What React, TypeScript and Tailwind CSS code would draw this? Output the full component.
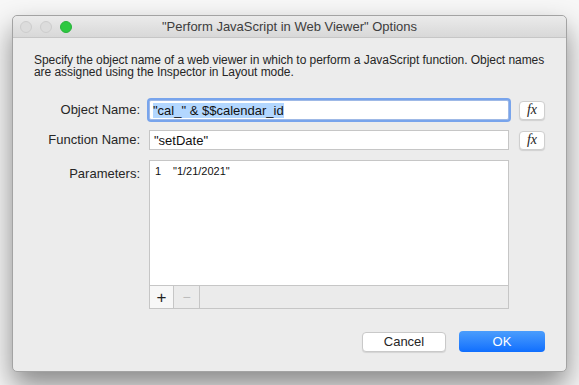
import React from "react";

const FxButton = () => (
  <div className="flex h-[19px] w-[26px] items-center justify-center rounded-[4px] border border-[#cfcfcf] bg-white shadow-[0_1px_1px_rgba(0,0,0,0.12)]">
    <span className="font-['Liberation_Serif',serif] text-[14px] italic leading-none text-[#222]">fx</span>
  </div>
);

const App = () => {
  return (
    <div className="h-[385px] w-[579px] overflow-hidden bg-[#f7f7f7] pl-[12px] pt-[15px] font-['Liberation_Sans',Arial,sans-serif] text-[#262626]">
      <div className="flex h-[357px] w-[555px] flex-col rounded-[5px] border border-[#a3a3a3] bg-[#ececec] shadow-[0_14px_28px_rgba(0,0,0,0.45)]">
        {/* title bar */}
        <div className="grid h-[22px] grid-cols-[1fr_auto_1fr] items-center rounded-t-[5px] border-b border-[#c6c6c6] bg-gradient-to-b from-[#ebebeb] to-[#d8d8d8]">
          <div className="flex items-center gap-[8px] pl-[7px]">
            <div className="h-[12px] w-[12px] rounded-full border border-[#cdcdcd] bg-[#dcdcdc]"></div>
            <div className="h-[12px] w-[12px] rounded-full border border-[#cdcdcd] bg-[#dcdcdc]"></div>
            <div className="h-[12px] w-[12px] rounded-full border border-[#27b23a] bg-[#2dc840]"></div>
          </div>
          <div className="text-[13px] leading-none text-[#3d3d3d]">"Perform JavaScript in Web Viewer" Options</div>
          <div></div>
        </div>

        <div className="flex flex-1 flex-col px-[21px] pt-[16px]">
          <p className="-mr-[14px] text-[12px] leading-[12px] tracking-[-0.05px]">
            Specify the object name of a web viewer in which to perform a JavaScript function. Object names are assigned using the Inspector in Layout mode.
          </p>

          <div className="mt-[22px] flex flex-col gap-[10px]">
            <div className="flex items-center">
              <div className="w-[107px] pr-[1px] text-right text-[13px]">Object Name:</div>
              <div className="ml-[8px] flex h-[20px] w-[360px] items-center rounded-[2px] border border-[#9fb9e6] bg-white pl-[3px] shadow-[0_0_0_2px_#78a4ec]">
                <span className="bg-[#b3d7ff] text-[13px] leading-[15px] text-[#111]">"cal_" &amp; $$calendar_id</span>
              </div>
              <div className="ml-[10px]"><FxButton /></div>
            </div>

            <div className="flex items-center">
              <div className="w-[107px] pr-[1px] text-right text-[13px]">Function Name:</div>
              <div className="ml-[8px] flex h-[20px] w-[360px] items-center border border-[#c6c6c6] bg-white pl-[4px]">
                <span className="text-[13px] leading-[15px] text-[#111]">"setDate"</span>
              </div>
              <div className="ml-[10px]"><FxButton /></div>
            </div>

            <div className="flex items-start">
              <div className="mt-[4px] w-[107px] pr-[1px] text-right text-[13px]">Parameters:</div>
              <div className="ml-[8px] flex h-[149px] w-[360px] flex-col border border-[#c6c6c6] bg-white">
                <div className="flex flex-1 pl-[5px] pt-[3px] text-[11px] leading-[14px] text-[#111]">
                  <span className="w-[18px]">1</span>
                  <span>"1/21/2021"</span>
                </div>
                <div className="flex h-[23px] border-t border-[#c6c6c6] bg-[#ebebeb]">
                  <div className="flex w-[24px] items-center justify-center border-r border-[#c6c6c6] bg-[#f7f7f7] text-[17px] leading-none text-[#222]">+</div>
                  <div className="flex w-[26px] items-center justify-center border-r border-[#c6c6c6] text-[14px] leading-none text-[#bcbcbc]">−</div>
                </div>
              </div>
            </div>
          </div>

          <div className="mt-[22px] flex items-center justify-end gap-[13px]">
            <div className="flex h-[20px] w-[84px] items-center justify-center rounded-[4px] border border-[#c9c9c9] bg-white text-[13px] shadow-[0_1px_1px_rgba(0,0,0,0.1)]">Cancel</div>
            <div className="flex h-[21px] w-[86px] items-center justify-center rounded-[4px] bg-gradient-to-b from-[#4a9dfc] to-[#0e6efe] text-[13px] text-white">OK</div>
          </div>
        </div>
      </div>
    </div>
  );
};

export default App;
